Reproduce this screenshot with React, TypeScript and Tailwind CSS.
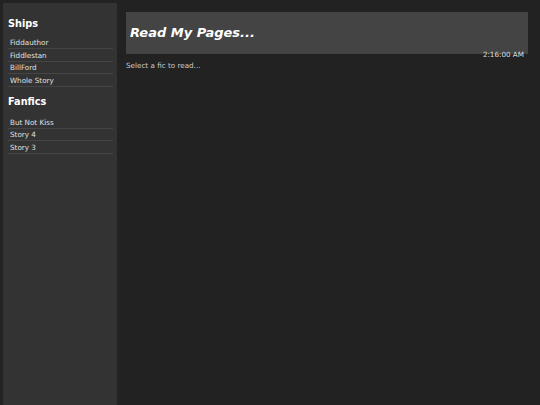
import React from "react";

const ships = ["Fiddauthor", "Fiddlestan", "BillFord", "Whole Story"];
const fanfics = ["But Not Kiss", "Story 4", "Story 3"];

function List({ items }: { items: string[] }) {
  return (
    <ul className="flex flex-col">
      {items.map((t) => (
        <li
          key={t}
          className="h-[12.6px] border-b border-[#454545] pl-[2px] pt-[1.5px] text-[7.2px] leading-[10px] text-[#e0e0e0]"
        >
          {t}
        </li>
      ))}
    </ul>
  );
}

export default function App() {
  return (
    <div
      className="flex h-[405px] w-[540px] overflow-hidden bg-[#222222]"
      style={{ fontFamily: '"DejaVu Sans", Verdana, sans-serif' }}
    >
      <aside className="ml-[3px] mt-[3px] flex w-[114px] shrink-0 flex-col bg-[#333333] pl-[5px] pr-[4px]">
        <h2 className="mt-[13.5px] h-[13px] text-[9.75px] font-bold leading-[13px] text-white">Ships</h2>
        <div className="mt-[7px]">
          <List items={ships} />
        </div>
        <h2 className="mt-[8.3px] h-[13px] text-[9.75px] font-bold leading-[13px] text-white">Fanfics</h2>
        <div className="mt-[8px]">
          <List items={fanfics} />
        </div>
      </aside>
      <main className="ml-[9px] mr-[12px] mt-[12px] flex flex-1 flex-col">
        <div className="flex h-[42px] items-center bg-[#444444] pl-[4px]">
          <h1 className="text-[13px] font-bold italic leading-[16px] text-white">Read My Pages...</h1>
        </div>
        <div className="-mt-[3px] pr-[4px] text-right text-[7.2px] leading-[8px] text-[#dddddd]">2:16:00 AM</div>
        <div className="mt-[3px] text-[7.2px] leading-[8px] text-[#cccccc]">Select a fic to read...</div>
      </main>
    </div>
  );
}
